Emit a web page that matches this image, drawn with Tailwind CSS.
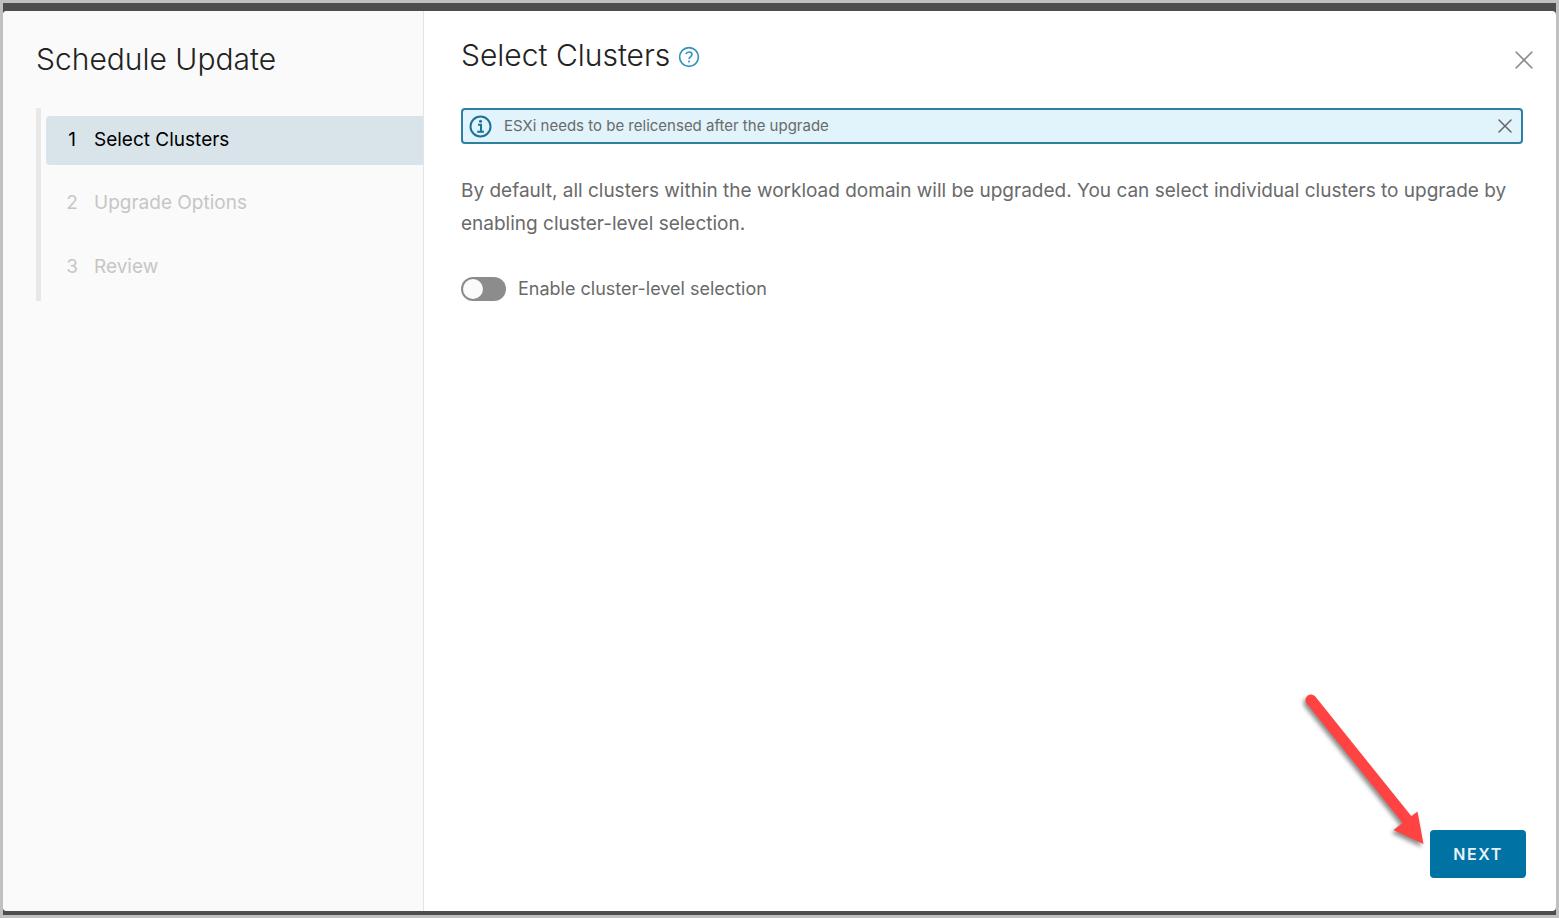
<!DOCTYPE html>
<html lang="en">
<head>
    <meta charset="UTF-8">
    <title>Schedule Update</title>
    <meta name="viewport" content="width=device-width, initial-scale=1">
    <script src="https://cdn.jsdelivr.net/npm/@tailwindcss/browser@4"></script>
</head>
<body class="font-['Inter',sans-serif] text-[#6a6a6a]">
    <div class="h-screen border-3 border-[#c0c0c0] bg-[#4d4d4d] pt-2 pb-1 overflow-hidden">
        <div role="dialog" aria-labelledby="wizard-title" class="relative flex h-full rounded-sm bg-white overflow-hidden">
            <!-- Steps -->
            <aside class="w-[421px] shrink-0 bg-[#fafafa] border-r border-[#e4e4e4] pl-[33px] pt-7">
                <h1 id="wizard-title" class="text-[30px] leading-10 font-light text-[#222]">Schedule Update</h1>
                <ol class="mt-[29px] border-l-5 border-[#e8e8e8] pl-[5px] pt-2 h-[193px] text-[19px] leading-6">
                    <li><button aria-current="step" class="flex w-full h-[49px] items-center gap-4 rounded-l-sm bg-[#d9e4ea] pl-5 pb-[2px] text-black"><span class="w-3 text-center">1</span><span>Select Clusters</span></button></li>
                    <li><button disabled class="mt-[14px] flex w-full h-[50px] items-center gap-4 pl-5 pb-[2px] text-[#c6c6c6]"><span class="w-3 text-center">2</span><span>Upgrade Options</span></button></li>
                    <li><button disabled class="mt-[14px] flex w-full h-[50px] items-center gap-4 pl-5 pb-[2px] text-[#c6c6c6]"><span class="w-3 text-center">3</span><span>Review</span></button></li>
                </ol>
            </aside>

            <!-- Page -->
            <main class="flex grow flex-col pl-[37px] pr-[30px] pt-6 pb-[33px]">
                <header class="flex items-center justify-between">
                    <div class="flex items-center gap-2">
                        <h2 class="text-[30px] leading-10 font-light text-[#222]">Select Clusters</h2>
                        <a href="#" aria-label="Help" class="pt-1">
                            <svg class="size-[22px]" viewBox="0 0 22 22" fill="none" stroke="#3192bd" stroke-width="1.6">
                                <circle cx="11" cy="11" r="9.4"/>
                                <path d="M7.8 8c.6-1.5 1.7-2 3.2-2 1.8 0 3 1 3 2.6 0 2.3-3 2.1-3 4.4"/>
                                <path d="M11 14.6v1.8"/>
                            </svg>
                        </a>
                    </div>
                    <button aria-label="Close" class="-mr-[7px] pt-[10px]">
                        <svg class="size-[18px]" viewBox="0 0 18 18" fill="none" stroke="#8c8c8c" stroke-width="1.6" stroke-linecap="round">
                            <path d="M1 1l16 16M17 1L1 17"/>
                        </svg>
                    </button>
                </header>

                <div role="status" class="mt-[33px] mr-[3px] flex h-9 shrink-0 items-center rounded-sm border-2 border-[#2f7f9f] bg-[#e1f3fb] pl-[6px] pr-[9px]">
                    <svg class="size-[23px] shrink-0" viewBox="0 0 23 23" fill="none" stroke="#1f7297" stroke-width="2">
                        <circle cx="11.5" cy="11.5" r="10"/>
                        <path d="M9 9.8h3v6.7M8.2 16.7h6.8"/>
                        <circle cx="11.5" cy="6.3" r="1.5" fill="#1f7297" stroke="none"/>
                    </svg>
                    <p class="ml-3 grow text-[15px] leading-6">ESXi needs to be relicensed after the upgrade</p>
                    <button aria-label="Dismiss">
                        <svg class="size-[14px]" viewBox="0 0 14 14" fill="none" stroke="#666" stroke-width="1.5" stroke-linecap="round">
                            <path d="M1 1l12 12M13 1L1 13"/>
                        </svg>
                    </button>
                </div>

                <p class="mt-[30px] text-[19px] leading-[33px]">By default, all clusters within the workload domain will be upgraded. You can select individual clusters to upgrade by enabling cluster-level selection.</p>

                <label class="mt-8 flex items-center gap-3 text-[18px] leading-[33px]">
                    <input type="checkbox" role="switch" class="h-6 w-[45px] appearance-none rounded-full bg-[#8c8c8c] before:block before:size-5 before:m-[2px] before:rounded-full before:bg-[#fafafa] checked:bg-[#5aa220] checked:before:ml-[23px]">
                    Enable cluster-level selection
                </label>

                <footer class="mt-auto flex justify-end">
                    <button class="h-12 w-24 rounded-sm bg-[#0072a3] text-base font-semibold tracking-widest text-[#e8f3f8]">NEXT</button>
                </footer>
            </main>

            <!-- Pointer to the next button -->
            <svg class="absolute right-[125px] bottom-[59px] h-[164px] w-[130px] pointer-events-none drop-shadow-[-2px_3px_2px_rgba(0,0,0,0.45)]" viewBox="0 0 130 164" fill="#ff4343">
                <path d="M10 12L112 139" stroke="#ff4343" stroke-width="11" stroke-linecap="round"/>
                <path d="M122.500 156L92.500 142L116.500 123.500Z"/>
            </svg>
        </div>
    </div>
</body>
</html>
